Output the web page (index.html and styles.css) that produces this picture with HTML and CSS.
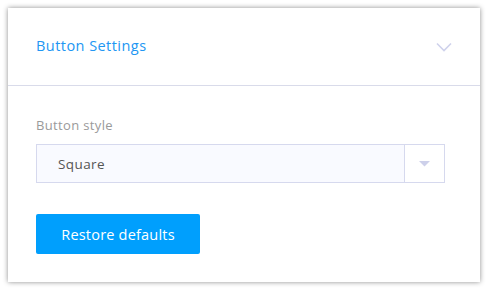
FILE: index.html
```html
<!DOCTYPE html>
<html>
<head>
<meta charset="utf-8">
<link rel="stylesheet" href="styles.css">
</head>
<body>
<div class="panel">
  <div class="panel-header">
    <span class="panel-title">Button Settings</span>
    <svg class="chevron" width="16" height="10" viewBox="0 0 16 10"><path d="M1 1.5 L8 8.5 L15 1.5" fill="none" stroke="#cfd2ec" stroke-width="1.6"/></svg>
  </div>
  <div class="panel-body">
    <div class="field-label">Button style</div>
    <div class="select">
      <div class="select-value">Square</div>
      <div class="select-arrow"><svg width="11" height="6" viewBox="0 0 11 6"><path d="M0 0 H11 L5.5 5.5 Z" fill="#cdd0ea"/></svg></div>
    </div>
    <button class="btn">Restore defaults</button>
  </div>
</div>
</body>
</html>
```
FILE: styles.css
```css
html, body { margin: 0; padding: 0; background: #fff; }
body { padding: 8px 10px 8px 8px; font-family: "Open Sans", "DejaVu Sans", sans-serif; }
.panel {
  width: 472px;
  height: 274px;
  box-sizing: border-box;
  background: #fff;
  box-shadow: 0 0 5px rgba(0,0,0,0.45);
}
.panel-header {
  height: 77px;
  border-bottom: 1px solid #d9dbea;
  display: flex;
  align-items: center;
  justify-content: space-between;
  padding: 0 28px 0 28px;
}
.panel-title { color: #2196f3; font-size: 14.5px; letter-spacing: 0.45px; margin-top: -2px; }
.panel-body { padding: 30px 35px 0 28px; }
.field-label { color: #9a9a9a; font-size: 13px; letter-spacing: 0.35px; line-height: 18px; }
.select {
  margin-top: 10px;
  height: 39px;
  box-sizing: border-box;
  border: 1px solid #d6d9ee;
  background: #f9faff;
  display: flex;
}
.select-value { flex: 1; display: flex; align-items: center; padding-left: 21px; color: #555; font-size: 13.5px; letter-spacing: 0.4px; }
.select-arrow { width: 39px; border-left: 1px solid #d6d9ee; background: #fff; display: flex; align-items: center; justify-content: center; }
.btn {
  margin-top: 31px;
  width: 164px;
  height: 40px;
  border: 0;
  border-radius: 2px;
  background: #009ffd;
  color: #fff;
  font-family: inherit;
  font-size: 14.5px;
  letter-spacing: 0.2px;
  padding: 0;
}
```
